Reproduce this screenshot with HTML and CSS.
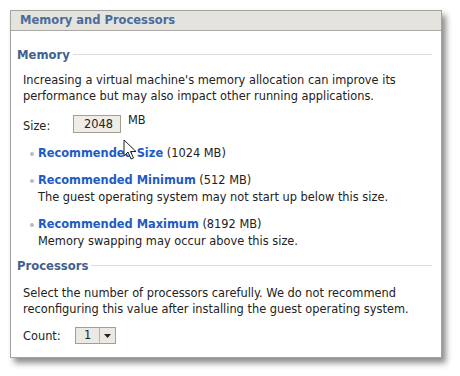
FILE: index.html
```html
<!DOCTYPE html>
<html>
<head>
<meta charset="utf-8">
<link rel="stylesheet" href="styles.css">
</head>
<body>
<div class="panel">
  <div class="titlebar">Memory and Processors</div>
  <div class="content">
    <div class="section-head"><span>Memory</span><i></i></div>
    <p class="para">Increasing a virtual machine's memory allocation can improve its performance but may also impact other running applications.</p>
    <div class="size-row">
      <span class="lbl">Size:</span>
      <span class="input">2048</span>
      <span class="unit">MB</span>
    </div>
    <ul class="recs">
      <li><a>Recommended Size</a> (1024 MB)</li>
      <li><a>Recommended Minimum</a> (512 MB)<div class="note">The guest operating system may not start up below this size.</div></li>
      <li><a>Recommended Maximum</a> (8192 MB)<div class="note">Memory swapping may occur above this size.</div></li>
    </ul>
    <div class="section-head proc"><span>Processors</span><i></i></div>
    <p class="para p2">Select the number of processors carefully. We do not recommend reconfiguring this value after installing the guest operating system.</p>
    <div class="count-row">
      <span class="lbl">Count:</span>
      <span class="select"><span class="val">1</span><span class="arrow"><svg width="7" height="4" viewBox="0 0 7 4"><path d="M0 0H7L3.5 4Z" fill="#222"/></svg></span></span>
    </div>
  </div>
</div>
<svg class="cursor" width="14" height="22" viewBox="0 0 14 22"><path d="M1 1V17L5 13L8 20L10.5 19L7.5 12.5H13Z" fill="#fff" stroke="#222" stroke-width="1" stroke-linejoin="round"/></svg>
</body>
</html>
```
FILE: styles.css
```css
html, body { margin: 0; padding: 0; background: #fff; }
body {
  width: 460px; height: 376px; position: relative; overflow: hidden;
  font-family: "DejaVu Sans", Verdana, sans-serif; font-size: 11.4px; color: #222;
  padding: 10px 0 0 10px; box-sizing: border-box;
}
.panel {
  width: 432px; height: 348px; box-sizing: border-box;
  border: 1px solid #a3a3a0; background: #fff;
  box-shadow: 4px 5px 6px rgba(0,0,0,0.45);
}
.titlebar {
  height: 19px; background: #e5e3dd; border-bottom: 1px solid #a9a8a2;
  color: #4a6c9b; font-weight: bold; font-size: 11.5px; line-height: 19px;
  padding-left: 9px;
}
.content { padding: 17px 9px 0 6px; }
.section-head { display: flex; align-items: center; gap: 3px; color: #3f6190; font-weight: bold; font-size: 11.6px; height: 14px; }
.section-head i { flex: 1; border-top: 1px solid #dcdcdc; margin-top: -1px; }
.section-head.proc { margin-top: 3px; }
.para { margin: 10px 0 0 6px; line-height: 16px; width: 400px; }
.para.p2 { margin-top: 12px; }
.size-row { display: flex; align-items: flex-start; margin: 11px 0 0 6px; height: 19px; }
.lbl { width: 50px; padding-top: 4px; }
.input {
  width: 48px; height: 18px; box-sizing: border-box; border: 1px solid #a2a096;
  background: #efede6; text-align: right; padding-right: 7px; line-height: 16px; margin-left: 0;
}
.unit { margin-left: 7px; margin-top: -2px; }
.recs { list-style: none; margin: 11px 0 0 13px; padding: 0; }
.recs li { position: relative; padding-left: 8px; line-height: 17px; margin-bottom: 10px; }
.recs li::before { content: ""; position: absolute; left: 0; top: 7px; width: 4px; height: 4px; border-radius: 50%; background: #bbb; }
.recs a { color: #1e5bc6; font-weight: bold; }
.note { line-height: 17px; }
.recs li:last-child { margin-bottom: 9px; }
.count-row { display: flex; align-items: center; margin: 10px 0 0 6px; }
.count-row .lbl { padding-top: 0; width: 52px; }
.select { display: flex; border: 1px solid #a2a096; height: 17px; box-sizing: border-box; background: #ebe9e2; }
.val { width: 23px; text-align: center; line-height: 15px; border-right: 1px solid #b4b2aa; }
.arrow { width: 15px; display: flex; align-items: center; justify-content: center; }
.cursor { position: absolute; left: 123px; top: 139px; }
```
